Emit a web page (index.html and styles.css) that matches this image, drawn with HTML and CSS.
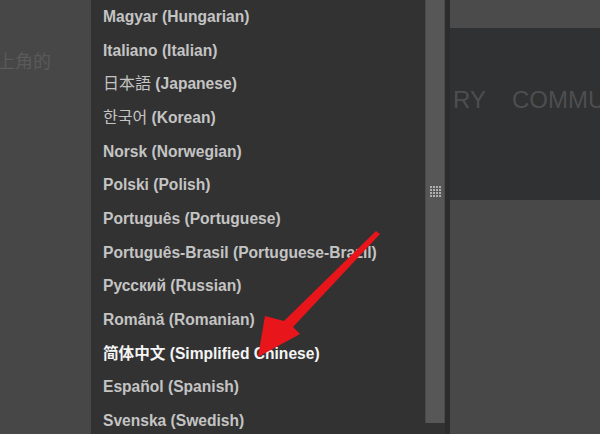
FILE: index.html
```html
<!DOCTYPE html>
<html lang="en">
  <head>
    <meta charset="UTF-8" />
    <title>Language Menu</title>
    <link rel="stylesheet" href="styles.css">
  </head>
  <body>
    <div class="screen">
      <div class="side">
        <p class="side-text">上角的</p>
      </div>

      <div class="menu">
        <ul class="lang-list">
          <li>Magyar (Hungarian)</li>
          <li>Italiano (Italian)</li>
          <li><span class="cjk">日本語</span> (Japanese)</li>
          <li><span class="cjk">한국어</span> (Korean)</li>
          <li>Norsk (Norwegian)</li>
          <li>Polski (Polish)</li>
          <li>Português (Portuguese)</li>
          <li>Português-Brasil (Portuguese-Brazil)</li>
          <li>Русский (Russian)</li>
          <li>Română (Romanian)</li>
          <li class="active">简体中文 (Simplified Chinese)</li>
          <li>Español (Spanish)</li>
          <li>Svenska (Swedish)</li>
        </ul>
        <div class="scrollbar">
          <div class="grip">
            <span></span><span></span><span></span><span></span>
            <span></span><span></span><span></span><span></span>
            <span></span><span></span><span></span><span></span>
            <span></span><span></span><span></span><span></span>
          </div>
        </div>
      </div>

      <div class="main">
        <div class="top-strip"></div>
        <div class="nav">
          <span class="nav-item">RY</span>
          <span class="nav-item">COMMUNITY</span>
        </div>
        <div class="content"></div>
      </div>

      <!-- the red pointer drawn over the screenshot -->
      <svg class="arrow" width="600" height="434" viewBox="0 0 600 434">
        <polygon points="376,231 380,234 293,327 300,334 258,357 265,316 284,321" fill="#e8161b" />
      </svg>
    </div>
  </body>
</html>
```

FILE: styles.css
```css
body {
  margin: 0;
  padding: 0;
  background-color: #474747;
  font-family: Arial, "Liberation Sans", "Noto Sans CJK SC", sans-serif;
  overflow: hidden;
}
.screen {
  position: relative;
  display: flex;
  width: 600px;
  height: 434px;
}
.side {
  width: 91px;
  flex-shrink: 0;
  background-color: #474747;
  overflow: hidden;
}
.side-text {
  margin: 47px 0 0 -3px;
  font-size: 18px;
  color: #5a5a5a;
  white-space: nowrap;
}
.menu {
  display: flex;
  width: 359px;
  flex-shrink: 0;
  background-color: #323232;
  border-right: 5px solid #2c2c2c;
  box-sizing: border-box;
}
.lang-list {
  list-style: none;
  margin: 0;
  padding: 8px 0 0 12px;
  flex: 1;
}
.lang-list li {
  height: 33.67px;
  line-height: 18px;
  font-size: 15.6px;
  font-weight: bold;
  color: #c4c4c4;
  white-space: nowrap;
}
.lang-list .cjk {
  font-weight: normal;
  font-size: 16px;
}
.lang-list li.active {
  color: #f4f4f4;
}
.scrollbar {
  width: 20px;
  height: 423px;
  background-color: #575757;
  border-left: 1px solid #4a4a4a;
  border-right: 1px solid #4a4a4a;
  box-sizing: border-box;
  display: flex;
  justify-content: center;
}
.grip {
  margin-top: 186px;
  display: grid;
  grid-template-columns: repeat(4, 2px);
  gap: 1px;
  height: 11px;
}
.grip span {
  width: 2px;
  height: 2px;
  background-color: #b0b0b0;
}
.arrow {
  position: absolute;
  left: 0;
  top: 0;
  pointer-events: none;
}
.main {
  flex: 1;
  display: flex;
  flex-direction: column;
  overflow: hidden;
}
.top-strip {
  height: 28px;
  background-color: #4b4b4b;
}
.nav {
  height: 172px;
  background-color: #303133;
  display: flex;
  gap: 26px;
  padding: 58px 0 0 3px;
  box-sizing: border-box;
  overflow: hidden;
  white-space: nowrap;
}
.nav-item {
  font-size: 24px;
  color: #4e4e4e;
}
.content {
  flex: 1;
  background-color: #484848;
}
```
